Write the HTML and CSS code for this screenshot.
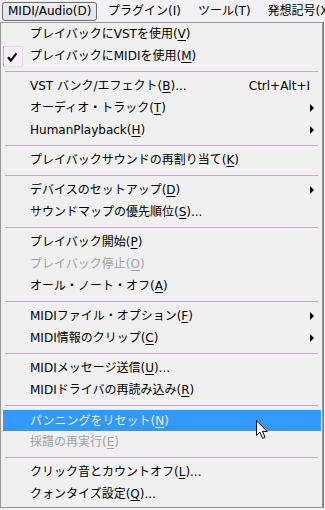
FILE: index.html
```html
<!DOCTYPE html>
<html lang="ja">
<head>
    <meta charset="UTF-8">
    <title>MIDI/Audio メニュー</title>
    <link rel="stylesheet" href="styles.css">
</head>
<body>

<!-- Barra de menú -->
<div class="menubar">
    <span class="bar-item open">MIDI/Audio(D)</span>
    <span class="bar-item">プラグイン(I)</span>
    <span class="bar-item">ツール(T)</span>
    <span class="bar-item">発想記号(X)</span>
</div>

<!-- Menú desplegable -->
<div class="menu">
    <div class="item"><span class="mark"></span><span class="label">プレイバックにVSTを使用(<u>V</u>)</span></div>
    <div class="item"><span class="mark checked"><svg width="20" height="21" viewBox="0 0 20 21"><path d="M5 11.2 L7.8 14.6 L13.4 7.4" fill="none" stroke="#000" stroke-width="2.2"/></svg></span><span class="label">プレイバックにMIDIを使用(<u>M</u>)</span></div>
    <div class="sep"></div>
    <div class="item"><span class="mark"></span><span class="label">VST バンク/エフェクト(<u>B</u>)...</span><span class="shortcut">Ctrl+Alt+I</span></div>
    <div class="item"><span class="mark"></span><span class="label">オーディオ・トラック(<u>T</u>)</span><span class="arrow"></span></div>
    <div class="item"><span class="mark"></span><span class="label">HumanPlayback(<u>H</u>)</span><span class="arrow"></span></div>
    <div class="sep"></div>
    <div class="item"><span class="mark"></span><span class="label">プレイバックサウンドの再割り当て(<u>K</u>)</span></div>
    <div class="sep"></div>
    <div class="item"><span class="mark"></span><span class="label">デバイスのセットアップ(<u>D</u>)</span><span class="arrow"></span></div>
    <div class="item"><span class="mark"></span><span class="label">サウンドマップの優先順位(<u>S</u>)...</span></div>
    <div class="sep"></div>
    <div class="item"><span class="mark"></span><span class="label">プレイバック開始(<u>P</u>)</span></div>
    <div class="item disabled"><span class="mark"></span><span class="label">プレイバック停止(<u>O</u>)</span></div>
    <div class="item"><span class="mark"></span><span class="label">オール・ノート・オフ(<u>A</u>)</span></div>
    <div class="sep"></div>
    <div class="item"><span class="mark"></span><span class="label">MIDIファイル・オプション(<u>F</u>)</span><span class="arrow"></span></div>
    <div class="item"><span class="mark"></span><span class="label">MIDI情報のクリップ(<u>C</u>)</span><span class="arrow"></span></div>
    <div class="sep"></div>
    <div class="item"><span class="mark"></span><span class="label">MIDIメッセージ送信(<u>U</u>)...</span></div>
    <div class="item"><span class="mark"></span><span class="label">MIDIドライバの再読み込み(<u>R</u>)</span></div>
    <div class="sep"></div>
    <div class="item hover"><span class="mark"></span><span class="label">パンニングをリセット(<u>N</u>)</span></div>
    <div class="item disabled"><span class="mark"></span><span class="label">採譜の再実行(<u>E</u>)</span></div>
    <div class="sep"></div>
    <div class="item"><span class="mark"></span><span class="label">クリック音とカウントオフ(<u>L</u>)...</span></div>
    <div class="item"><span class="mark"></span><span class="label">クォンタイズ設定(<u>Q</u>)...</span></div>
</div>

<!-- Puntero del ratón -->
<svg class="cursor" width="14" height="20" viewBox="0 0 14 20">
    <path d="M0.5 0.5 L0.5 15.5 L4 12.2 L6.6 18.3 L9 17.3 L6.5 11.4 L11.2 11.4 Z" fill="#fff" stroke="#000" stroke-width="1" stroke-linejoin="miter"/>
</svg>

</body>
</html>
```

FILE: styles.css
```css
body {
    margin: 0;
    padding: 0;
    width: 325px;
    height: 510px;
    overflow: hidden;
    position: relative;
    background-color: #f4f4f4;
    font-family: "DejaVu Sans", "Noto Sans CJK JP", sans-serif;
    font-size: 12px;
    color: #000;
}

/* Barra de menú */
.menubar {
    height: 22px;
    display: flex;
    align-items: flex-start;
    gap: 5px;
    padding-left: 2px;
    background-color: #f2f2f4;
    white-space: nowrap;
}

.bar-item {
    height: 17px;
    margin-top: 2px;
    padding: 0 5px;
    border: 1px solid transparent;
    line-height: 17px;
}

.bar-item.open {
    border-color: #6b6b6b;
    border-radius: 3px;
    background: linear-gradient(#eeeef2, #e2e2e8);
    padding: 0 5px;
    width: 83px;
}

/* Menú desplegable */
.menu {
    box-sizing: border-box;
    width: 323px;
    height: 486px;
    padding: 0 1px 2px 2px;
    background-color: #f0f0f0;
    border: 1px solid #979797;
    box-shadow: 1px 0 0 #7a7a7a;
}

.item {
    display: flex;
    align-items: center;
    height: 22px;
    white-space: nowrap;
}

.mark {
    box-sizing: border-box;
    width: 20px;
    height: 21px;
    margin-right: 7px;
    flex-shrink: 0;
}

.mark.checked {
    background-color: #f7eff7;
    border: 1px solid #e2dbe4;
    border-left-color: #b8b3ba;
}

.mark.checked svg {
    display: block;
    margin: -1px 0 0 -1px;
}

.label {
    line-height: 22px;
}

.label u {
    text-decoration-thickness: 1px;
    text-underline-offset: 2px;
}

.shortcut {
    margin-left: auto;
    margin-right: 11px;
}

.arrow {
    margin-left: auto;
    margin-right: 7px;
    width: 0;
    height: 0;
    border-top: 4px solid transparent;
    border-bottom: 4px solid transparent;
    border-left: 4px solid #000;
}

.disabled {
    color: #a0a0a0;
}

.hover {
    background-color: #3399ff;
    color: #e6eef9;
    height: 21px;
    margin-top: 1px;
}

.sep {
    height: 8px;
    display: flex;
    align-items: center;
}

.sep::before {
    content: "";
    display: block;
    height: 1px;
    margin: 1px 3px 0 2px;
    flex: 1;
    background-color: #bcb0c0;
}

/* Puntero */
.cursor {
    position: absolute;
    left: 256px;
    top: 420px;
}
```
